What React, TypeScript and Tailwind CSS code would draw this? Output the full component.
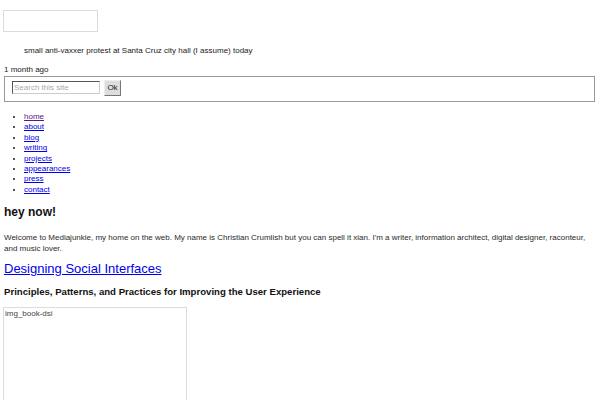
import React from "react";

const links = ["home", "about", "blog", "writing", "projects", "appearances", "press", "contact"];

export default function App() {
  return (
    <div className="font-['Liberation_Sans',Arial,sans-serif] text-[8px] leading-[10px] text-[#1a1a1a] bg-white h-[400px] overflow-hidden">
      <div className="pt-[10px] pl-[3px]">
        <div className="w-[95px] h-[22px] border border-[#dcdcdc]" />
      </div>
      <p className="mt-[14px] pl-[24px] leading-[10px]">
        small anti-vaxxer protest at Santa Cruz city hall (I assume) today
      </p>
      <p className="mt-[9px] pl-[4px] leading-[10px]">1 month ago</p>
      <form className="mt-[1px] ml-[4px] w-[591px] h-[26px] border border-[#999] flex items-start gap-[4px] pl-[7px] pt-[3px]">
        <input
          placeholder="Search this site"
          className="mt-[1px] w-[88px] h-[13px] border border-t-[#555] border-l-[#555] border-b-[#ccc] border-r-[#ccc] px-[1px] text-[8px] leading-[11px] placeholder:text-[#aaa] outline-none"
        />
        <button
          type="button"
          className="w-[17px] h-[16px] bg-[#ddd] border border-t-[#eee] border-l-[#eee] border-b-[#777] border-r-[#777] text-[8px] leading-[14px] text-[#222] text-center p-0"
        >
          Ok
        </button>
      </form>
      <ul className="mt-[10px] pl-[24px] list-disc leading-[10.4px]">
        {links.map((l, i) => (
          <li key={l}>
            <a href="#" className={"underline " + (i === 0 ? "text-[#551a8b]" : "text-[#0000ee]")}>
              {l}
            </a>
          </li>
        ))}
      </ul>
      <h1 className="mt-[10px] pl-[4px] text-[12px] leading-[14px] font-bold text-[#111]">hey now!</h1>
      <p className="mt-[12.5px] px-[4px] leading-[11px] text-[#2a2a2a]">
        Welcome to Mediajunkie, my home on the web. My name is Christian Crumlish but you can spell it xian. I'm a writer, information architect, digital designer, raconteur, and music lover.
      </p>
      <h2 className="mt-[7px] pl-[4px] text-[13px] leading-[15px]">
        <a href="#" className="underline text-[#0000ee]">Designing Social Interfaces</a>
      </h2>
      <h3 className="mt-[10.5px] pl-[4px] text-[9.6px] leading-[12px] font-bold text-[#111]">
        Principles, Patterns, and Practices for Improving the User Experience
      </h3>
      <div className="mt-[9px] ml-[3px] w-[184px] h-[93px] border border-b-0 border-[#dcdcdc] pl-[1px] pt-[1px] text-[#444] leading-[10px]">
        img_book-dsi
      </div>
    </div>
  );
}
